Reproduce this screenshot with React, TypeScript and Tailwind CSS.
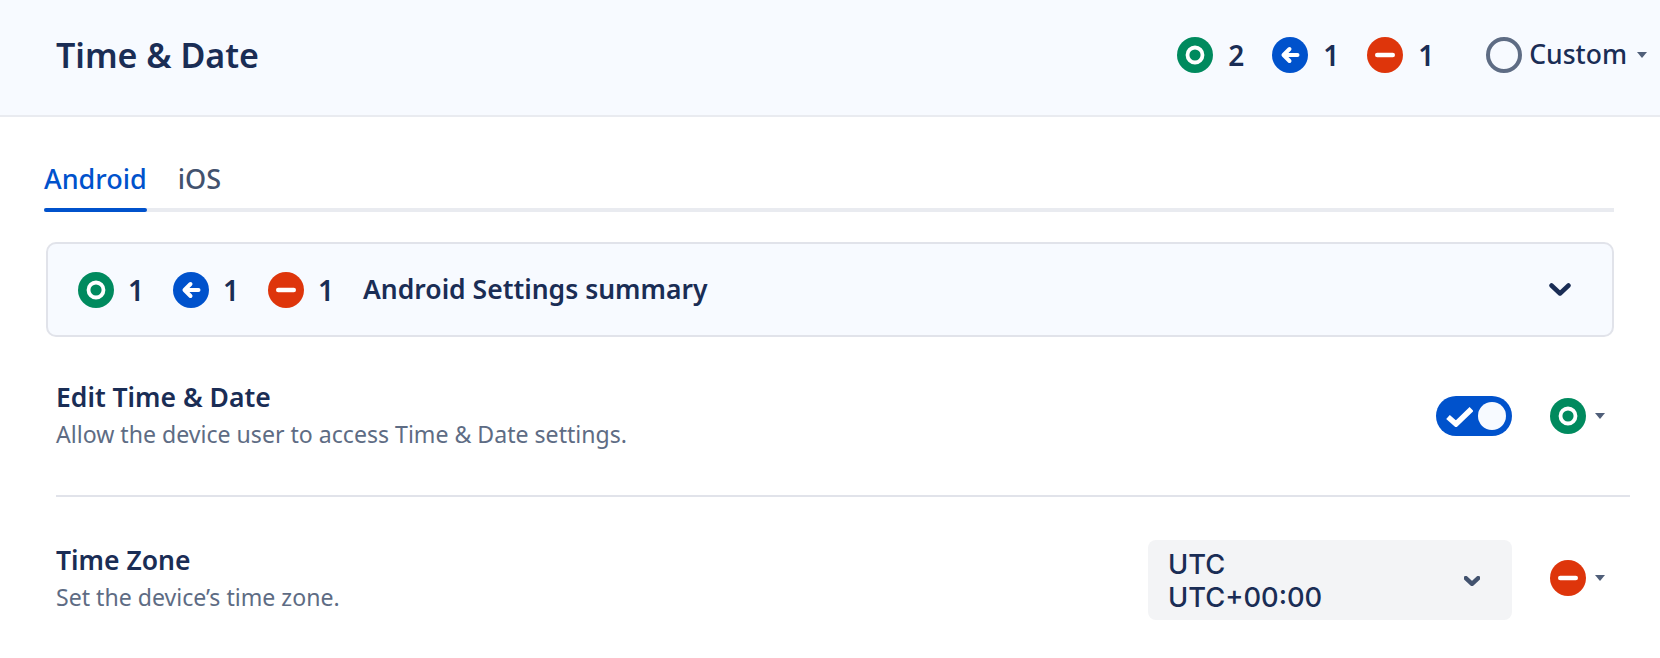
const font = "font-['Noto_Sans',sans-serif]"

const Included = () => (
    <svg width="36" height="36" viewBox="0 0 36 36" className="shrink-0">
        <circle cx="18" cy="18" r="18" fill="#008a5e" />
        <circle cx="18" cy="18" r="7.5" fill="none" stroke="#ffffff" strokeWidth="3.8" />
    </svg>
)

const Inherited = () => (
    <svg width="36" height="36" viewBox="0 0 36 36" className="shrink-0">
        <circle cx="18" cy="18" r="18" fill="#0052cc" />
        <path d="M25.5 18H12M17.5 12l-6 6 6 6" fill="none" stroke="#ffffff" strokeWidth="4" strokeLinecap="round" strokeLinejoin="round" />
    </svg>
)

const Excluded = () => (
    <svg width="36" height="36" viewBox="0 0 36 36" className="shrink-0">
        <circle cx="18" cy="18" r="18" fill="#de350b" />
        <rect x="8" y="15.75" width="20" height="4.5" rx="2.25" fill="#ffffff" />
    </svg>
)

const Caret = () => (
    <svg width="10" height="6" viewBox="0 0 10 6" className="shrink-0">
        <path d="M0 0h10L5 6z" fill="#505f79" />
    </svg>
)

const Chevron = ({ color, width, height, stroke }: { color: string; width: number; height: number; stroke: number }) => (
    <svg width={width} height={height} viewBox="0 0 22 13" className="shrink-0">
        <path d="M2.5 2.5 11 10.5l8.5-8" fill="none" stroke={color} strokeWidth={stroke} strokeLinecap="round" strokeLinejoin="round" />
    </svg>
)

const Count = ({ icon, value, className }: { icon: React.ReactNode; value: number; className: string }) => (
    <div className={`flex items-center ${className}`}>
        {icon}
        <span className="text-[28px] font-semibold">{value}</span>
    </div>
)

export default function App() {
    return (
        <div className={`w-[1660px] h-[658px] overflow-hidden bg-white text-[#1a2d55] ${font}`}>
            <header className="flex h-[117px] items-center justify-between border-b-2 border-[#e9ebf0] bg-[#f7faff] pb-[5px] pl-[56px] pr-[13px]">
                <h1 className="text-[34px] font-semibold">Time &amp; Date</h1>
                <div className="flex items-center text-[26.5px]">
                    <Count icon={<Included />} value={2} className="w-[95px] gap-[15px]" />
                    <Count icon={<Inherited />} value={1} className="w-[95px] gap-[15px]" />
                    <Count icon={<Excluded />} value={1} className="w-[119px] gap-[15px]" />
                    <div className="h-[36px] w-[36px] rounded-full border-[4px] border-[#5e6c84]" />
                    <span className="ml-[7px] font-medium">Custom</span>
                    <span className="ml-[10px]"><Caret /></span>
                </div>
            </header>

            <nav className="relative ml-[44px] mr-[46px] mt-[42px] flex h-[53px] gap-[31px] border-b-4 border-[#e9ebf0] text-[27px] font-medium">
                <span className="relative text-[#0052cc]">
                    Android
                    <span className="absolute -bottom-[4px] left-0 right-0 h-[4px] rounded-full bg-[#0052cc]" />
                </span>
                <span className="text-[#42526e]">iOS</span>
            </nav>

            <section className="ml-[46px] mr-[46px] mt-[30px] flex h-[95px] items-center justify-between rounded-[10px] border-2 border-[#e1e3ea] bg-[#f7faff] pl-[30px] pr-[41px]">
                <div className="flex items-center text-[26px]">
                    <Count icon={<Included />} value={1} className="w-[95px] gap-[14px]" />
                    <Count icon={<Inherited />} value={1} className="w-[95px] gap-[14px]" />
                    <Count icon={<Excluded />} value={1} className="w-[95px] gap-[14px]" />
                    <span className="text-[26.5px] font-semibold">Android Settings summary</span>
                </div>
                <Chevron color="#1a2d55" width={22} height={13} stroke={4.5} />
            </section>

            <div className="ml-[56px] mr-[30px] flex h-[160px] items-center justify-between border-b-2 border-[#e1e3ea]">
                <div className="flex flex-col gap-[6px] pb-[2px]">
                    <span className="text-[26.5px] leading-[32px] font-semibold">Edit Time &amp; Date</span>
                    <span className="text-[23.1px] leading-[30px] text-[#5e6c84]">Allow the device user to access Time &amp; Date settings.</span>
                </div>
                <div className="flex items-center">
                    <div className="flex h-[40px] w-[76px] items-center justify-between rounded-full bg-[#0052cc] pl-[10px] pr-[6px]">
                        <svg width="27" height="21" viewBox="0 0 27 21">
                            <path d="M2 11l8 7L25.5 3" fill="none" stroke="#ffffff" strokeWidth="5.5" />
                        </svg>
                        <div className="h-[28px] w-[28px] rounded-full bg-[#f7faff]" />
                    </div>
                    <div className="ml-[38px] mr-[25px] flex items-center gap-[9px]">
                        <Included />
                        <Caret />
                    </div>
                </div>
            </div>

            <div className="ml-[56px] mr-[30px] mt-[43px] flex h-[80px] items-center justify-between">
                <div className="flex flex-col gap-[6px] pb-[4px]">
                    <span className="text-[26.5px] leading-[32px] font-semibold">Time Zone</span>
                    <span className="text-[23.1px] leading-[30px] text-[#5e6c84]">Set the device’s time zone.</span>
                </div>
                <div className="flex items-center">
                    <div className="flex h-[80px] w-[364px] items-center justify-between rounded-[8px] bg-[#f3f4f6] pt-[2px] pl-[20px] pr-[32px] font-['Inter',sans-serif] text-[27.3px] font-medium leading-[33px]">
                        <div className="flex flex-col">
                            <span>UTC</span>
                            <span>UTC+00:00</span>
                        </div>
                        <Chevron color="#42526e" width={16} height={10} stroke={6} />
                    </div>
                    <div className="mb-[4px] ml-[38px] mr-[25px] flex items-center gap-[9px]">
                        <Excluded />
                        <Caret />
                    </div>
                </div>
            </div>
        </div>
    )
}
